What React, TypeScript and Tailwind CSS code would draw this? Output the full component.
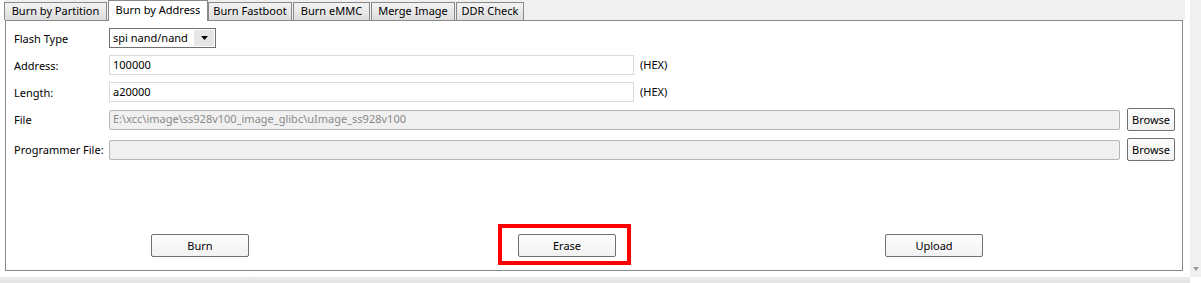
import React from "react";

const tabs = [
  { label: "Burn by Partition", w: "w-[103px]" },
  { label: "Burn by Address", w: "w-[100px]", active: true },
  { label: "Burn Fastboot", w: "w-[84px]" },
  { label: "Burn eMMC", w: "w-[77px]" },
  { label: "Merge Image", w: "w-[84px]" },
  { label: "DDR Check", w: "w-[68px]" },
];

function Label({ children }: { children: React.ReactNode }) {
  return <div className="w-[103px] shrink-0 pl-[8px] leading-none whitespace-nowrap">{children}</div>;
}

function Btn({ children, className = "" }: { children: React.ReactNode; className?: string }) {
  return (
    <button
      className={`h-[23px] shrink-0 border border-[#707070] rounded-[2px] bg-gradient-to-b from-[#fdfdfd] to-[#f2f2f2] text-black leading-none ${className}`}
    >
      {children}
    </button>
  );
}

export default function App() {
  return (
    <div
      className="w-[1201px] h-[283px] bg-white overflow-hidden flex text-[11px] text-black"
      style={{ fontFamily: '"Noto Sans", "DejaVu Sans", sans-serif' }}
    >
      <div className="w-[1190px] flex flex-col">
        <div className="ml-[4px] w-[1181px] flex flex-col">
          {/* tab bar */}
          <div className="h-[20px] bg-[#f0f0f0] flex items-end relative z-10 whitespace-nowrap">
            {tabs.map((t) =>
              t.active ? (
                <div
                  key={t.label}
                  className={`${t.w} h-[21px] -mb-[1px] bg-white border border-b-0 border-[#898989] flex items-center justify-center pb-[2px]`}
                >
                  {t.label}
                </div>
              ) : (
                <div
                  key={t.label}
                  className={`${t.w} h-[18px] mr-[1px] bg-gradient-to-b from-[#f3f3f3] to-[#dddddd] border border-b-0 border-[#898989] flex items-center justify-center`}
                >
                  {t.label}
                </div>
              )
            )}
          </div>
          {/* panel */}
          <div className="ml-[1px] w-[1178px] h-[251px] border border-[#898989] bg-white flex flex-col pt-[7px] pr-[7px]">
            <div className="flex items-center h-[20px]">
              <Label>Flash Type</Label>
              <div className="w-[107px] h-[20px] border border-[#707070] flex items-center whitespace-nowrap">
                <span className="pl-[3px] flex-1">spi nand/nand</span>
                <span className="w-[20px] h-[16px] mr-[1px] bg-[#e6e6e6] flex items-center justify-center">
                  <svg width="7" height="4" viewBox="0 0 7 4">
                    <path d="M0 0h7L3.5 4z" fill="#000" />
                  </svg>
                </span>
              </div>
            </div>
            <div className="flex items-center h-[20px] mt-[7px]">
              <Label>Address:</Label>
              <div className="w-[525px] h-[20px] border border-[#d9d9d9] flex items-center pl-[3px]">100000</div>
              <span className="ml-[6px]">(HEX)</span>
            </div>
            <div className="flex items-center h-[20px] mt-[7px]">
              <Label>Length:</Label>
              <div className="w-[525px] h-[20px] border border-[#d9d9d9] flex items-center pl-[3px]">a20000</div>
              <span className="ml-[6px]">(HEX)</span>
            </div>
            <div className="flex items-center h-[23px] mt-[6px]">
              <Label>File</Label>
              <div className="flex-1 h-[20px] border border-[#b5b5b5] bg-[#f0f0f0] rounded-[2px] flex items-center pl-[3px] text-[#8a8a8a] whitespace-nowrap">
                E:\xcc\image\ss928v100_image_glibc\uImage_ss928v100
              </div>
              <Btn className="w-[48px] ml-[7px]">Browse</Btn>
            </div>
            <div className="flex items-center h-[23px] mt-[7px]">
              <Label>Programmer File:</Label>
              <div className="flex-1 h-[20px] border border-[#b5b5b5] bg-[#f0f0f0] rounded-[2px]" />
              <Btn className="w-[48px] ml-[7px]">Browse</Btn>
            </div>
            <div className="flex items-center mt-[73px] pl-[145px]">
              <Btn className="w-[98px]">Burn</Btn>
              <div className="relative ml-[269px]">
                <Btn className="w-[98px]">Erase</Btn>
                <span className="absolute -left-[20px] -right-[15px] -top-[10px] -bottom-[8px] border-[4px] border-[#ff0000] pointer-events-none" />
              </div>
              <Btn className="w-[98px] ml-[269px]">Upload</Btn>
            </div>
          </div>
        </div>
        <div className="mt-auto h-[6px] bg-gradient-to-b from-[#ececec] to-[#e4e4e4]" />
      </div>
      {/* scrollbar */}
      <div className="w-[11px] h-[277px] bg-[#f0f0f0] flex flex-col justify-end items-center pb-[6px]">
        <svg width="6" height="4" viewBox="0 0 6 4">
          <path d="M0 0h6L3 4z" fill="#9a9a9a" />
        </svg>
      </div>
    </div>
  );
}
